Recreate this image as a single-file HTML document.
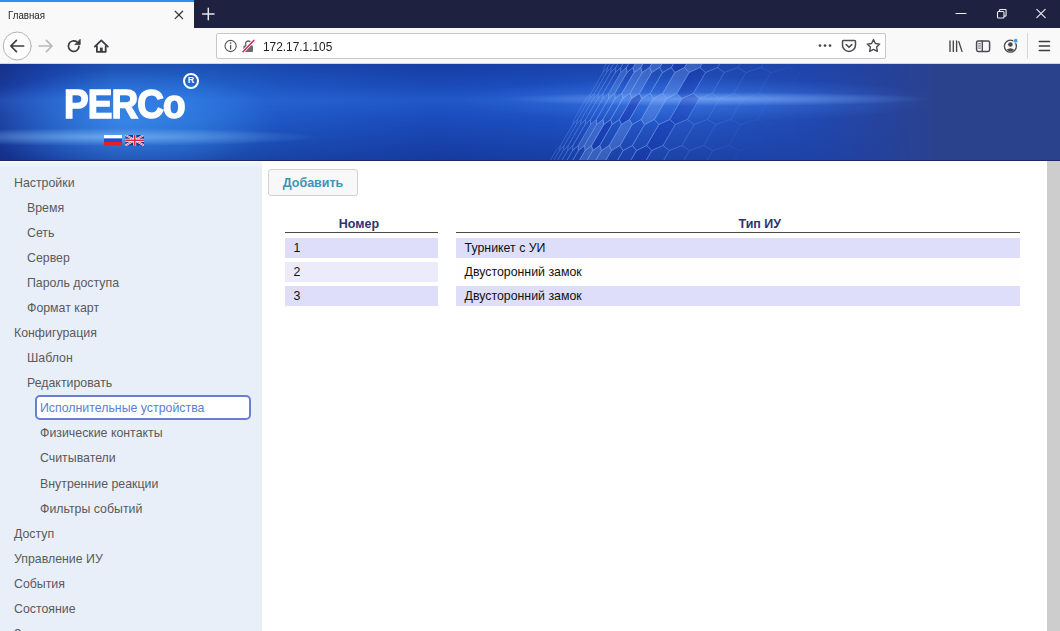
<!DOCTYPE html>
<html lang="ru">
<head>
<meta charset="utf-8">
<title>Главная</title>
<style>
*{box-sizing:border-box;margin:0;padding:0}
html,body{width:1060px;height:631px;overflow:hidden;background:#fff;font-family:"Liberation Sans",sans-serif;}
body{position:relative}
.abs{position:absolute}
/* ---------- browser chrome ---------- */
#tabbar{left:0;top:0;width:1060px;height:28px;background:#1f2140}
#tab{left:0;top:0;width:194px;height:28px;background:#f9f9fa;border-top:2px solid #2b90ee}
#tab .t{left:8px;top:6.800px;font-size:11px;color:#222;white-space:nowrap;transform:scaleX(.885);transform-origin:0 0}
#navbar{left:0;top:28px;width:1060px;height:36px;background:#f9f9fa;border-bottom:1px solid #d6d6da}
#urlbar{left:216px;top:33px;width:670px;height:26px;background:#fff;border:1px solid #c8c8cc;border-radius:2px}
#url{left:262.500px;top:39.500px;font-size:12.300px;color:#222;white-space:nowrap;transform:scaleX(.965);transform-origin:0 0}
/* ---------- page ---------- */
#banner{left:0;top:64px;width:1060px;height:97px;background:#2a418c;overflow:hidden}
#bimg{left:0;top:0;width:940px;height:97px;overflow:hidden}
.lay{left:0;top:0;width:940px;height:97px}
#logo{left:64px;top:19.5px;font-size:40px;font-weight:bold;color:#fff;line-height:40px;letter-spacing:-1px;white-space:nowrap;-webkit-text-stroke:1.5px #fff;transform:scaleX(.925);transform-origin:0 0}
#reg{left:183px;top:8.5px;width:16px;height:16px;border:2.4px solid #fff;border-radius:50%;color:#fff;font-size:9px;font-weight:bold;line-height:11.5px;text-align:center}
#flags{left:104px;top:71px}
#hex{left:0;top:0}
#chrome{left:0;top:0}
#bline{left:0;top:96px;width:1060px;height:1px;background:#1b2a66}
#sidebar{left:0;top:161px;width:262px;height:470px;background:linear-gradient(to bottom,#f6f9fe 0,#eef3fb 3px,#e9eff9 7px,#e9eff9 100%)}
#sbar{left:1047px;top:161px;width:13px;height:470px;background:#cdcdcd}
.m{position:absolute;margin-top:1px;font-size:12.350px;color:#5a5a5a;white-space:nowrap;line-height:15px}
.l0{left:14px}.l1{left:27px}.l2{left:40px}
#sel{left:34.500px;top:395px;width:216px;height:24.500px;background:#fff;border:2px solid #6a7fd3;border-radius:5px}
#btn{left:268px;top:169px;width:90px;height:27px;background:#f8f8f8;border:1px solid #d2d2d2;border-radius:3px;font-size:12.500px;font-weight:bold;color:#3a96b4;text-align:center;line-height:27px}
.th{position:absolute;font-size:12.500px;font-weight:bold;color:#2b3470;white-space:nowrap;line-height:14px}
.hl{position:absolute;height:1.500px;background:#4a4a4a}
.c{position:absolute;height:19.600px;font-size:12.350px;color:#111;line-height:20.600px;white-space:nowrap;padding-left:8.600px}
.a{background:#dedefa}.b{background:#ebebfc}.w{background:#fefeff}
</style>
</head>
<body>
<!-- browser chrome -->
<div id="tabbar" class="abs"></div>
<div id="tab" class="abs"><span class="abs t">Главная</span></div>
<div id="navbar" class="abs"></div>
<div id="urlbar" class="abs"></div>
<span id="url" class="abs">172.17.1.105</span>
<svg id="chrome" class="abs" width="1060" height="64" viewBox="0 0 1060 64" fill="none" stroke-linecap="round" stroke-linejoin="round">
  <!-- tab close / new tab -->
  <path d="M175.2 11.2l7.4 7.4M182.6 11.2l-7.4 7.4" stroke="#3a3a3c" stroke-width="1.3"/>
  <path d="M208.3 8.3v11.4M202.6 14h11.4" stroke="#e6e6ea" stroke-width="1.5"/>
  <!-- window controls -->
  <path d="M956 13.5h10" stroke="#f0f0f4" stroke-width="1.2"/>
  <rect x="997.5" y="11.5" width="6.5" height="6.5" rx="1" stroke="#f0f0f4" stroke-width="1.1"/>
  <path d="M999.5 11.3V10.3q0-.8.8-.8h5q.8 0 .8.8v5q0 .8-.8.8h-1" stroke="#f0f0f4" stroke-width="1.1"/>
  <path d="M1036.8 9.3l8.4 8.4M1045.2 9.3l-8.4 8.4" stroke="#f0f0f4" stroke-width="1.1"/>
  <!-- back -->
  <circle cx="17.2" cy="46" r="14" fill="#fdfdfe" stroke="#b4b4b8" stroke-width="1"/>
  <path d="M23.6 46H11M16.4 40.4L10.8 46l5.6 5.6" stroke="#3c3c40" stroke-width="1.7"/>
  <!-- forward (disabled) -->
  <path d="M39.2 46h12.6M46.4 40.4L52 46l-5.6 5.6" stroke="#b9b9bd" stroke-width="1.7"/>
  <!-- reload -->
  <path d="M79 46.4a5.3 5.3 0 1 1-2.2-4.6" stroke="#3c3c40" stroke-width="1.7"/>
  <path d="M80.2 39.6v5h-5z" fill="#3c3c40" stroke="#3c3c40" stroke-width=".8"/>
  <!-- home -->
  <path d="M94.8 46.6l6.5-6.2 6.5 6.2" stroke="#3c3c40" stroke-width="1.8"/>
  <path d="M96.9 46.2v5.6h8.8v-5.6" stroke="#3c3c40" stroke-width="1.8"/>
  <rect x="99.9" y="47.6" width="2.8" height="4" fill="#3c3c40"/>
  <!-- info -->
  <circle cx="230.6" cy="46" r="5.6" stroke="#55555a" stroke-width="1.1"/>
  <path d="M230.6 45.4v3.6" stroke="#55555a" stroke-width="1.3"/>
  <circle cx="230.6" cy="43" r=".85" fill="#55555a"/>
  <!-- insecure lock -->
  <rect x="243.4" y="45.6" width="9.6" height="6.4" rx="1" fill="#6a6a70"/>
  <path d="M245.6 45.6v-2a2.6 2.6 0 0 1 5.2 0v2" stroke="#6a6a70" stroke-width="1.4"/>
  <path d="M243 51.8L253.8 40.4" stroke="#fff" stroke-width="3"/>
  <path d="M243 51.8L253.8 40.4" stroke="#d7264b" stroke-width="1.5"/>
  <!-- page actions dots -->
  <circle cx="820" cy="45.6" r="1.35" fill="#4a4a4f"/><circle cx="825" cy="45.6" r="1.35" fill="#4a4a4f"/><circle cx="830" cy="45.6" r="1.35" fill="#4a4a4f"/>
  <!-- pocket -->
  <path d="M843.4 40.6h11.2q.9 0 .9.9v3.6a6.5 6.3 0 0 1-13 0v-3.600q0-.9.9-.9z" stroke="#4a4a4f" stroke-width="1.5"/>
  <path d="M846.2 44.6l2.8 2.7 2.8-2.700" stroke="#4a4a4f" stroke-width="1.5"/>
  <!-- star -->
  <path d="M873.5 39.6l1.9 3.9 4.3.6-3.100 3 .75 4.300-3.850-2.050-3.850 2.050.75-4.300-3.100-3 4.300-.6z" stroke="#4a4a4f" stroke-width="1.4"/>
  <!-- library -->
  <path d="M950 41v10.400M953.300 41v10.400M956.600 41v10.400M958.800 41.600l3.200 9.800" stroke="#4a4a4f" stroke-width="1.4"/>
  <!-- sidebar -->
  <rect x="976.600" y="41" width="13" height="10.400" rx="1.600" stroke="#4a4a4f" stroke-width="1.5"/>
  <path d="M982.300 41v10.400" stroke="#4a4a4f" stroke-width="1.400"/>
  <path d="M978.600 43.700h1.800M978.600 45.900h1.800M978.600 48.100h1.800" stroke="#4a4a4f" stroke-width=".9"/>
  <!-- account -->
  <circle cx="1010.400" cy="46.200" r="6" stroke="#4a4a4f" stroke-width="1.300"/>
  <circle cx="1010.400" cy="44.500" r="2.300" fill="#4a4a4f"/>
  <path d="M1006.500 49.800q3.900-3.200 7.800 0-3.900 3.300-7.800 0z" fill="#4a4a4f"/>
  <circle cx="1015.800" cy="40.700" r="2.300" fill="#2a9df4" stroke="#f9f9fa" stroke-width=".8"/>
  <!-- separator -->
  <path d="M1027.500 33.500v24.500" stroke="#d4d4d8" stroke-width="1"/>
  <!-- hamburger -->
  <path d="M1039.300 41.600h10.200M1039.300 46h10.200M1039.300 50.400h10.200" stroke="#3c3c40" stroke-width="1.500"/>
</svg>

<!-- page banner -->
<div id="banner" class="abs">
  <div id="bimg" class="abs">
    <div class="abs lay" style="background:linear-gradient(to right,#1a3a9a 0,#1d4db8 5%,#2566d0 12%,#2468d2 20%,#1f58c6 30%,#1b4cbc 46%,#1d50c2 58%,#2559ca 70%,#2250bc 79%,#2149b0 87%,#27439a 95%,#2a418c 100%)"></div>
    <div class="abs lay" style="-webkit-mask-image:linear-gradient(to right,#000 0,#000 72%,transparent 97%);mask-image:linear-gradient(to right,#000 0,#000 72%,transparent 97%);background:linear-gradient(to bottom,rgba(12,24,100,.28) 0,rgba(12,24,100,.05) 22%,rgba(60,130,240,.22) 37%,rgba(12,24,100,0) 55%,rgba(12,24,100,.34) 100%)"></div>
    <div class="abs lay" style="background:radial-gradient(ellipse 150px 52px at 125px 58px,rgba(70,160,250,.55),rgba(70,160,250,0))"></div>
    <div class="abs lay" style="background:radial-gradient(ellipse 210px 9px at 110px 73px,rgba(140,200,255,.6),rgba(140,200,255,0))"></div>
    <div class="abs lay" style="background:radial-gradient(ellipse 240px 22px at 700px 36px,rgba(70,130,235,.5),rgba(70,130,235,0))"></div>
    <div class="abs lay" style="background:radial-gradient(ellipse 215px 7px at 715px 35px,rgba(140,185,255,.62),rgba(140,185,255,0))"></div>
  </div>
<svg id="hex" class="abs" width="940" height="97" viewBox="0 0 940 97">
<defs><linearGradient id="hg" gradientUnits="userSpaceOnUse" x1="548" y1="97" x2="713" y2="193"><stop offset="0" stop-color="#fff" stop-opacity=".35"/><stop offset=".15" stop-color="#fff" stop-opacity=".9"/><stop offset=".42" stop-color="#fff" stop-opacity=".8"/><stop offset=".6" stop-color="#fff" stop-opacity=".3"/><stop offset=".85" stop-color="#fff" stop-opacity=".08"/><stop offset="1" stop-color="#fff" stop-opacity="0"/></linearGradient><mask id="hm"><rect x="0" y="0" width="940" height="97" fill="url(#hg)"/></mask></defs>
<g mask="url(#hm)">
<path fill="rgba(20,45,165,.45)" d="M638.7 -17.5 L644.8 -22.5 L645.4 -17.5 L633.2 3.5 L626.9 8.5 L626.5 3.5Z"/>
<path fill="rgba(150,190,255,.28)" d="M645.4 -17.5 L652.0 -22.5 L653.0 -17.5 L640.8 3.5 L634.0 8.5 L633.2 3.5Z"/>
<path fill="rgba(150,190,255,.28)" d="M661.8 -17.5 L669.5 -22.5 L671.9 -17.5 L659.7 3.5 L651.6 8.5 L649.6 3.5Z"/>
<path fill="rgba(20,45,165,.45)" d="M683.5 -17.5 L692.8 -22.5 L696.8 -17.5 L684.6 3.5 L674.8 8.5 L671.3 3.5Z"/>
<path fill="rgba(150,190,255,.28)" d="M696.8 -17.5 L707.1 -22.5 L712.1 -17.5 L699.9 3.5 L689.1 8.5 L684.6 3.5Z"/>
<path fill="rgba(150,190,255,.28)" d="M620.7 8.5 L626.5 3.5 L626.9 8.5 L614.7 29.5 L608.6 34.5 L608.5 29.5Z"/>
<path fill="rgba(150,190,255,.28)" d="M634.0 8.5 L640.8 3.5 L642.2 8.5 L630.0 29.5 L622.8 34.5 L621.8 29.5Z"/>
<path fill="rgba(150,190,255,.28)" d="M642.2 8.5 L649.6 3.5 L651.6 8.5 L639.4 29.5 L631.6 34.5 L630.0 29.5Z"/>
<path fill="rgba(150,190,255,.28)" d="M674.8 8.5 L684.6 3.5 L689.1 8.5 L676.9 29.5 L666.6 34.5 L662.6 29.5Z"/>
<path fill="rgba(20,45,165,.45)" d="M689.1 8.5 L699.9 3.5 L705.5 8.5 L693.3 29.5 L681.9 34.5 L676.9 29.5Z"/>
<path fill="rgba(20,45,165,.45)" d="M631.6 34.5 L639.4 29.5 L641.7 34.5 L629.5 55.5 L621.4 60.5 L619.4 55.5Z"/>
<path fill="rgba(150,190,255,.28)" d="M653.3 34.5 L662.6 29.5 L666.6 34.5 L654.4 55.5 L644.6 60.5 L641.1 55.5Z"/>
<path fill="rgba(20,45,165,.45)" d="M681.9 34.5 L693.3 29.5 L699.5 34.5 L687.3 55.5 L675.3 60.5 L669.7 55.5Z"/>
<path fill="rgba(150,190,255,.28)" d="M590.5 60.5 L596.4 55.5 L596.7 60.5 L584.5 81.5 L578.4 86.5 L578.3 81.5Z"/>
<path fill="rgba(150,190,255,.28)" d="M596.7 60.5 L603.0 55.5 L603.8 60.5 L591.6 81.5 L585.1 86.5 L584.5 81.5Z"/>
<path fill="rgba(20,45,165,.45)" d="M603.8 60.5 L610.7 55.5 L612.0 60.5 L599.8 81.5 L592.7 86.5 L591.6 81.5Z"/>
<path fill="rgba(150,190,255,.28)" d="M621.4 60.5 L629.5 55.5 L632.2 60.5 L620.0 81.5 L611.5 86.5 L609.2 81.5Z"/>
<path fill="rgba(20,45,165,.45)" d="M658.9 60.5 L669.7 55.5 L675.3 60.5 L663.1 81.5 L651.8 86.5 L646.7 81.5Z"/>
<path fill="rgba(150,190,255,.28)" d="M585.1 86.5 L591.6 81.5 L592.7 86.5 L580.5 107.5 L573.7 112.5 L572.9 107.5Z"/>
<path fill="rgba(150,190,255,.28)" d="M592.7 86.5 L599.8 81.5 L601.5 86.5 L589.3 107.5 L581.8 112.5 L580.5 107.5Z"/>
<path fill="rgba(150,190,255,.28)" d="M601.5 86.5 L609.2 81.5 L611.5 86.5 L599.4 107.5 L591.2 112.5 L589.3 107.5Z"/>
<path fill="rgba(20,45,165,.45)" d="M636.5 86.5 L646.7 81.5 L651.8 86.5 L639.6 107.5 L628.8 112.5 L624.3 107.5Z"/>
<path fill="rgba(20,45,165,.45)" d="M566.5 112.5 L572.9 107.5 L573.7 112.5 L561.5 133.5 L554.9 138.5 L554.4 133.5Z"/>
<path fill="rgba(20,45,165,.45)" d="M591.2 112.5 L599.4 107.5 L602.1 112.5 L589.9 133.5 L581.4 138.5 L579.1 133.5Z"/>
<path fill="none" stroke="#8fb6ff" stroke-opacity=".75" stroke-width=".9" d="M616.4 -17.5 L620.9 -22.5 L619.7 -17.5 L624.5 -22.5 L623.5 -17.5 L628.5 -22.5 L627.9 -17.5 L633.2 -22.5 L632.9 -17.5 L638.6 -22.5 L638.7 -17.5 L644.8 -22.5 L645.4 -17.5 L652.0 -22.5 L653.0 -17.5 L660.1 -22.5 L661.8 -17.5 L669.5 -22.5 L671.9 -17.5 L680.4 -22.5 L683.5 -17.5 L692.8 -22.5 L696.8 -17.5 L707.1 -22.5 L712.1 -17.5 L723.5 -22.5 L729.7 -17.5 L742.3 -22.5 L749.9 -17.5 L764.0 -22.5 L773.1 -17.5 L788.9 -22.5 L799.8 -17.5 L817.5 -22.5 L830.5 -17.5 M604.2 3.5 L602.9 8.5 L607.5 3.5 L606.5 8.5 L611.4 3.5 L610.6 8.5 L615.7 3.5 L615.3 8.5 L620.8 3.5 L620.7 8.5 L626.5 3.5 L626.9 8.5 L633.2 3.5 L634.0 8.5 L640.8 3.5 L642.2 8.5 L649.6 3.5 L651.6 8.5 L659.7 3.5 L662.4 8.5 L671.3 3.5 L674.8 8.5 L684.6 3.5 L689.1 8.5 L699.9 3.5 L705.5 8.5 L717.5 3.5 L724.3 8.5 L737.7 3.5 L746.0 8.5 L760.9 3.5 L770.9 8.5 L787.6 3.5 L799.5 8.5 L818.3 3.5 M586.2 34.5 L590.8 29.5 L589.6 34.5 L594.3 29.5 L593.4 34.5 L598.4 29.5 L597.8 34.5 L603.1 29.5 L602.8 34.5 L608.5 29.5 L608.6 34.5 L614.7 29.5 L615.2 34.5 L621.8 29.5 L622.8 34.5 L630.0 29.5 L631.6 34.5 L639.4 29.5 L641.7 34.5 L650.2 29.5 L653.3 34.5 L662.6 29.5 L666.6 34.5 L676.9 29.5 L681.9 34.5 L693.3 29.5 L699.5 34.5 L712.2 29.5 L719.7 34.5 L733.8 29.5 L742.9 34.5 L758.7 29.5 L769.6 34.5 L787.3 29.5 L800.3 34.5 M574.1 55.5 L572.8 60.5 L577.4 55.5 L576.3 60.5 L581.2 55.5 L580.4 60.5 L585.6 55.5 L585.1 60.5 L590.6 55.5 L590.5 60.5 L596.4 55.5 L596.7 60.5 L603.0 55.5 L603.8 60.5 L610.7 55.5 L612.0 60.5 L619.4 55.5 L621.4 60.5 L629.5 55.5 L632.2 60.5 L641.1 55.5 L644.6 60.5 L654.4 55.5 L658.9 60.5 L669.7 55.5 L675.3 60.5 L687.3 55.5 L694.2 60.5 L707.5 55.5 L715.8 60.5 L730.8 55.5 L740.7 60.5 L757.4 55.5 L769.3 60.5 L788.1 55.5 M556.1 86.5 L560.6 81.5 L559.4 86.5 L564.1 81.5 L563.2 86.5 L568.2 81.5 L567.6 86.5 L572.9 81.5 L572.6 86.5 L578.3 81.5 L578.4 86.5 L584.5 81.5 L585.1 86.5 L591.6 81.5 L592.7 86.5 L599.8 81.5 L601.5 86.5 L609.2 81.5 L611.5 86.5 L620.0 81.5 L623.1 86.5 L632.5 81.5 L636.5 86.5 L646.7 81.5 L651.8 86.5 L663.1 81.5 L669.3 86.5 L682.0 81.5 L689.6 86.5 L703.7 81.5 L712.8 86.5 L728.6 81.5 L739.5 86.5 L757.2 81.5 L770.1 86.5 M543.9 107.5 L542.6 112.5 L547.2 107.5 L546.2 112.5 L551.0 107.5 L550.2 112.5 L555.4 107.5 L554.9 112.5 L560.4 107.5 L560.3 112.5 L566.2 107.5 L566.5 112.5 L572.9 107.5 L573.7 112.5 L580.5 107.5 L581.8 112.5 L589.3 107.5 L591.2 112.5 L599.4 107.5 L602.1 112.5 L611.0 107.5 L614.5 112.5 L624.3 107.5 L628.8 112.5 L639.6 107.5 L645.2 112.5 L657.2 107.5 L664.0 112.5 L677.4 107.5 L685.7 112.5 L700.6 107.5 L710.6 112.5 L727.3 107.5 L739.2 112.5 L758.0 107.5 M525.9 138.5 L530.4 133.5 L529.2 138.5 L534.0 133.5 L533.1 138.5 L538.1 133.5 L537.4 138.5 L542.8 133.5 L542.5 138.5 L548.2 133.5 L548.2 138.5 L554.4 133.5 L554.9 138.5 L561.5 133.5 L562.5 138.5 L569.7 133.5 L571.3 138.5 L579.1 133.5 L581.4 138.5 L589.9 133.5 L593.0 138.5 L602.3 133.5 L606.3 138.5 L616.6 133.5 L621.6 138.5 L633.0 133.5 L639.2 138.5 L651.8 133.5 L659.4 138.5 L673.5 133.5 L682.6 138.5 L698.4 133.5 L709.3 138.5 L727.0 133.5 L740.0 138.5 M616.4 -17.5 L604.2 3.5 M619.7 -17.5 L607.5 3.5 M623.5 -17.5 L611.4 3.5 M627.9 -17.5 L615.7 3.5 M632.9 -17.5 L620.8 3.5 M638.7 -17.5 L626.5 3.5 M645.4 -17.5 L633.2 3.5 M653.0 -17.5 L640.8 3.5 M661.8 -17.5 L649.6 3.5 M671.9 -17.5 L659.7 3.5 M683.5 -17.5 L671.3 3.5 M696.8 -17.5 L684.6 3.5 M712.1 -17.5 L699.9 3.5 M729.7 -17.5 L717.5 3.5 M749.9 -17.5 L737.7 3.5 M773.1 -17.5 L760.9 3.5 M799.8 -17.5 L787.6 3.5 M830.5 -17.5 L818.3 3.5 M602.9 8.5 L590.8 29.5 M606.5 8.5 L594.3 29.5 M610.6 8.5 L598.4 29.5 M615.3 8.5 L603.1 29.5 M620.7 8.5 L608.5 29.5 M626.9 8.5 L614.7 29.5 M634.0 8.5 L621.8 29.5 M642.2 8.5 L630.0 29.5 M651.6 8.5 L639.4 29.5 M662.4 8.5 L650.2 29.5 M674.8 8.5 L662.6 29.5 M689.1 8.5 L676.9 29.5 M705.5 8.5 L693.3 29.5 M724.3 8.5 L712.2 29.5 M746.0 8.5 L733.8 29.5 M770.9 8.5 L758.7 29.5 M799.5 8.5 L787.3 29.5 M586.2 34.5 L574.1 55.5 M589.6 34.5 L577.4 55.5 M593.4 34.5 L581.2 55.5 M597.8 34.5 L585.6 55.5 M602.8 34.5 L590.6 55.5 M608.6 34.5 L596.4 55.5 M615.2 34.5 L603.0 55.5 M622.8 34.5 L610.7 55.5 M631.6 34.5 L619.4 55.5 M641.7 34.5 L629.5 55.5 M653.3 34.5 L641.1 55.5 M666.6 34.5 L654.4 55.5 M681.9 34.5 L669.7 55.5 M699.5 34.5 L687.3 55.5 M719.7 34.5 L707.5 55.5 M742.9 34.5 L730.8 55.5 M769.6 34.5 L757.4 55.5 M800.3 34.5 L788.1 55.5 M572.8 60.5 L560.6 81.5 M576.3 60.5 L564.1 81.5 M580.4 60.5 L568.2 81.5 M585.1 60.5 L572.9 81.5 M590.5 60.5 L578.3 81.5 M596.7 60.5 L584.5 81.5 M603.8 60.5 L591.6 81.5 M612.0 60.5 L599.8 81.5 M621.4 60.5 L609.2 81.5 M632.2 60.5 L620.0 81.5 M644.6 60.5 L632.5 81.5 M658.9 60.5 L646.7 81.5 M675.3 60.5 L663.1 81.5 M694.2 60.5 L682.0 81.5 M715.8 60.5 L703.7 81.5 M740.7 60.5 L728.6 81.5 M769.3 60.5 L757.2 81.5 M556.1 86.5 L543.9 107.5 M559.4 86.5 L547.2 107.5 M563.2 86.5 L551.0 107.5 M567.6 86.5 L555.4 107.5 M572.6 86.5 L560.4 107.5 M578.4 86.5 L566.2 107.5 M585.1 86.5 L572.9 107.5 M592.7 86.5 L580.5 107.5 M601.5 86.5 L589.3 107.5 M611.5 86.5 L599.4 107.5 M623.1 86.5 L611.0 107.5 M636.5 86.5 L624.3 107.5 M651.8 86.5 L639.6 107.5 M669.3 86.5 L657.2 107.5 M689.6 86.5 L677.4 107.5 M712.8 86.5 L700.6 107.5 M739.5 86.5 L727.3 107.5 M770.1 86.5 L758.0 107.5 M542.6 112.5 L530.4 133.5 M546.2 112.5 L534.0 133.5 M550.2 112.5 L538.1 133.5 M554.9 112.5 L542.8 133.5 M560.3 112.5 L548.2 133.5 M566.5 112.5 L554.4 133.5 M573.7 112.5 L561.5 133.5 M581.8 112.5 L569.7 133.5 M591.2 112.5 L579.1 133.5 M602.1 112.5 L589.9 133.5 M614.5 112.5 L602.3 133.5 M628.8 112.5 L616.6 133.5 M645.2 112.5 L633.0 133.5 M664.0 112.5 L651.8 133.5 M685.7 112.5 L673.5 133.5 M710.6 112.5 L698.4 133.5 M739.2 112.5 L727.0 133.5"/>
</g></svg>
  <div id="logo" class="abs">PERCo</div>
  <div id="reg" class="abs">R</div>
  <svg id="flags" class="abs" width="40" height="11" viewBox="0 0 40 11">
    <rect x="0" y="0" width="18" height="3.5" fill="#fff"/>
    <rect x="0" y="3.5" width="18" height="3.5" fill="#2a49c8"/>
    <rect x="0" y="7" width="18" height="3.4" fill="#e0202c"/>
    <g transform="translate(21.5,0)">
      <rect x="0" y="0" width="18.5" height="10.4" fill="#24338f"/>
      <path d="M0 0L18.5 10.4M18.5 0L0 10.4" stroke="#fff" stroke-width="1.900"/>
      <path d="M0 0L18.5 10.4M18.5 0L0 10.4" stroke="#d8283a" stroke-width=".700"/>
      <path d="M9.25 0V10.4M0 5.2H18.5" stroke="#fff" stroke-width="2.900"/>
      <path d="M9.25 0V10.4M0 5.2H18.5" stroke="#d8283a" stroke-width="1.600"/>
    </g>
  </svg>
  <div id="bline" class="abs"></div>
</div>

<!-- sidebar -->
<div id="sidebar" class="abs"></div>
<div id="sel" class="abs"></div>
<span class="m l0" style="top:175px">Настройки</span>
<span class="m l1" style="top:200px">Время</span>
<span class="m l1" style="top:225px">Сеть</span>
<span class="m l1" style="top:250px">Сервер</span>
<span class="m l1" style="top:275px">Пароль доступа</span>
<span class="m l1" style="top:300px">Формат карт</span>
<span class="m l0" style="top:325px">Конфигурация</span>
<span class="m l1" style="top:350px">Шаблон</span>
<span class="m l1" style="top:375px">Редактировать</span>
<span class="m l2" style="top:400px;color:#5b7fd0">Исполнительные устройства</span>
<span class="m l2" style="top:425.300px">Физические контакты</span>
<span class="m l2" style="top:450.400px">Считыватели</span>
<span class="m l2" style="top:476px">Внутренние реакции</span>
<span class="m l2" style="top:501px">Фильтры событий</span>
<span class="m l0" style="top:526px">Доступ</span>
<span class="m l0" style="top:551px">Управление ИУ</span>
<span class="m l0" style="top:576px">События</span>
<span class="m l0" style="top:601px">Состояние</span>
<span class="m l0" style="top:626px">Задания</span>

<!-- content -->
<div id="btn" class="abs">Добавить</div>
<span class="th" style="left:338.800px;top:216.800px">Номер</span>
<span class="th" style="left:738.500px;top:216.800px">Тип ИУ</span>
<div class="hl" style="left:285px;top:231.700px;width:153px"></div>
<div class="hl" style="left:456px;top:231.700px;width:564px"></div>
<div class="c a" style="left:285px;top:238px;width:153px">1</div>
<div class="c b" style="left:285px;top:262px;width:153px">2</div>
<div class="c a" style="left:285px;top:286px;width:153px">3</div>
<div class="c a" style="left:456px;top:238px;width:564px">Турникет с УИ</div>
<div class="c w" style="left:456px;top:262px;width:564px">Двусторонний замок</div>
<div class="c a" style="left:456px;top:286px;width:564px">Двусторонний замок</div>

<div id="sbar" class="abs"></div>
</body>
</html>
